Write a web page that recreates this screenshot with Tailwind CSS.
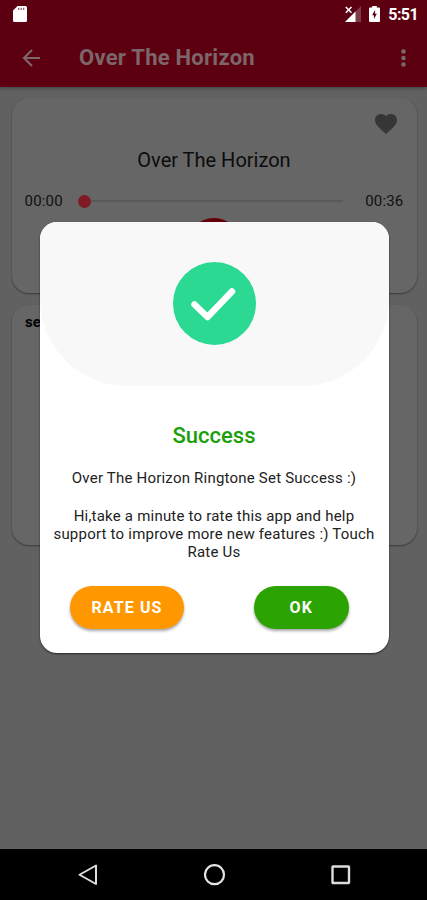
<!DOCTYPE html>
<html lang="en">
<head>
    <meta charset="UTF-8">
    <meta name="viewport" content="width=device-width, initial-scale=1.0">
    <title>Over The Horizon</title>
    <script src="https://cdn.jsdelivr.net/npm/@tailwindcss/browser@4"></script>
</head>
<body class="font-[Roboto,sans-serif] bg-black">
    <div class="relative w-[427px] h-[900px] flex flex-col overflow-hidden bg-[#616161]">

        <!-- Status bar + toolbar -->
        <header class="h-[87px] shrink-0 bg-[#5c0011] shadow-[0_1px_4px_rgba(0,0,0,0.35)]">
            <div class="h-7 flex items-center pl-[13px] pr-[9px]">
                <svg class="w-[14px] h-4" viewBox="0 0 14 16">
                    <path fill="#fff" d="M4.600 0H12.500Q14 0 14 1.500V14.500Q14 16 12.500 16H1.500Q0 16 0 14.500V4.600Z"/>
                    <path stroke="#8a5560" stroke-width="1.2" d="M5.700 1.700V4M8.200 1.700V4M10.700 1.700V4"/>
                </svg>
                <svg class="ml-auto w-4 h-4" viewBox="0 0 16 16">
                    <path fill="#7d3b48" d="M16 0V16H0Z"/>
                    <path fill="#5c0011" d="M0 0H8V8H0Z"/>
                    <path fill="#fff" d="M10.500 5.500V16H0Z"/>
                    <path stroke="#fff" stroke-width="1.500" d="M.8 1L6.500 6.700M6.500 1L.8 6.700"/>
                </svg>
                <svg class="ml-2 w-[11px] h-4" viewBox="0 0 11 16">
                    <path fill="#fff" d="M3.200 0H7.800V1.600H10Q11 1.600 11 2.600V15Q11 16 10 16H1Q0 16 0 15V2.600Q0 1.600 1 1.600H3.200Z"/>
                    <path fill="#5c0011" d="M6.100 4L3.100 9.300H4.900V13L7.900 7.700H6.100Z"/>
                </svg>
                <span class="ml-[8px] pt-px text-base leading-7 font-bold text-white tracking-[-0.6px]">5:51</span>
            </div>
            <div class="h-[59px] flex items-center pl-[22px] pr-[21px]">
                <svg class="w-[18px] h-[18px]" viewBox="0 0 18 18" fill="none" stroke="#7c6669" stroke-width="2.200">
                    <path d="M18 9H2M10 1L2 9L10 17"/>
                </svg>
                <h1 class="ml-[39px] pt-px text-[22px] leading-[58px] font-bold tracking-[0.25px] text-[#7c6669]">Over The Horizon</h1>
                <svg class="ml-auto w-[5px] h-[18px]" viewBox="0 0 5 18" fill="#7c6669">
                    <circle cx="2.500" cy="2.500" r="2.300"/>
                    <circle cx="2.500" cy="9" r="2.300"/>
                    <circle cx="2.500" cy="15.500" r="2.300"/>
                </svg>
            </div>
        </header>

        <main class="flex-1 flex flex-col pl-[11.5px] pr-[10.5px] pt-[11px] gap-3">
            <!-- Player card -->
            <section class="h-[195px] shrink-0 rounded-[17px] bg-[#666] shadow-[0_1px_2px_rgba(0,0,0,0.4)] px-[13px] overflow-hidden">
                <div class="flex justify-end pt-[16px] pr-[6.5px]">
                    <svg class="w-[22px] h-5" viewBox="2 3 20 18.350" preserveAspectRatio="none" fill="#363636">
                        <path d="M12 21.350l-1.450-1.320C5.400 15.360 2 12.280 2 8.500 2 5.420 4.420 3 7.500 3c1.740 0 3.410.810 4.500 2.090C13.090 3.810 14.760 3 16.500 3 19.580 3 22 5.420 22 8.500c0 3.780-3.400 6.860-8.550 11.540L12 21.350z"/>
                    </svg>
                </div>
                <h2 class="mt-[14px] text-center text-[20px] leading-6 text-[#0c0c0c]">Over The Horizon</h2>
                <div class="mt-[19px] flex items-center text-[15px] leading-5 tracking-[0.2px] text-[#111]">
                    <span class="w-[53.5px]">00:00</span>
                    <span class="w-[13px] h-[13px] rounded-full bg-[#7f1a26]"></span>
                    <span class="h-[2px] w-[252px] bg-[#595959]"></span>
                    <span class="ml-auto">00:36</span>
                </div>
                <div class="mt-[7px] mx-auto w-[54px] h-[54px] rounded-full bg-[#660008]"></div>
            </section>

            <section class="h-[240px] shrink-0 rounded-[17px] bg-[#666] shadow-[0_1px_2px_rgba(0,0,0,0.4)] px-[13.5px] pt-[7px]">
                <p class="text-[15px] leading-5 font-bold text-black">set</p>
            </section>
        </main>

        <!-- Navigation bar -->
        <nav class="h-[51px] shrink-0 bg-black flex items-center pl-[78px] pr-[76px] justify-between">
            <svg class="w-5 h-[22px]" viewBox="0 0 20 22" fill="none" stroke="#ddd" stroke-width="2" stroke-linejoin="round">
                <path d="M18 1.500V20L1.500 10.750Z"/>
            </svg>
            <svg class="w-[22px] h-[22px]" viewBox="0 0 22 22" fill="none" stroke="#e4e4e4" stroke-width="2.200">
                <circle cx="10.500" cy="10.700" r="9.500"/>
            </svg>
            <svg class="w-5 h-5" viewBox="0 0 20 20" fill="none" stroke="#ddd" stroke-width="2.400">
                <rect x="1.500" y="1.500" width="16.500" height="16.500" rx="0.500"/>
            </svg>
        </nav>

        <!-- Success dialog -->
        <div class="absolute left-[39.5px] top-[222px] w-[349px] h-[430.5px] rounded-[17px] bg-white overflow-hidden shadow-[0_1px_2px_rgba(0,0,0,0.6)] text-center text-[#222]">
            <div class="h-[164px] rounded-b-[87px] bg-[#f8f8f8] flex justify-center pt-[40px]">
                <svg class="w-[83px] h-[83px]" viewBox="0 0 83 83">
                    <circle cx="41.500" cy="41.500" r="41.500" fill="#2bd993"/>
                    <path d="M21.500 42.500L34.500 55L59 29.500" fill="none" stroke="#fff" stroke-width="6.500" stroke-linecap="round" stroke-linejoin="round"/>
                </svg>
            </div>
            <h3 class="mt-[36px] text-[22px] leading-7 font-medium text-[#1a9f0a]">Success</h3>
            <p class="mt-[19px] text-[15px] leading-[18px] tracking-[0.21px]">Over The Horizon Ringtone Set Success :)</p>
            <p class="mt-[20px] text-[15px] leading-[18px] tracking-[0.21px]">Hi,take a minute to rate this app and help<br>support to improve more new features :) Touch<br>Rate Us</p>
            <div class="mt-[25px] flex justify-between pl-[30.5px] pr-[39.5px] text-white text-base font-bold tracking-[1.1px]">
                <button class="w-[114px] h-[43px] pt-px rounded-full bg-[#ff9800] shadow-[0_2px_3px_rgba(0,0,0,0.35)]">RATE US</button>
                <button class="w-[95.5px] h-[43px] pt-px rounded-full bg-[#2ba300] shadow-[0_2px_3px_rgba(0,0,0,0.35)]">OK</button>
            </div>
        </div>
    </div>
</body>
</html>
